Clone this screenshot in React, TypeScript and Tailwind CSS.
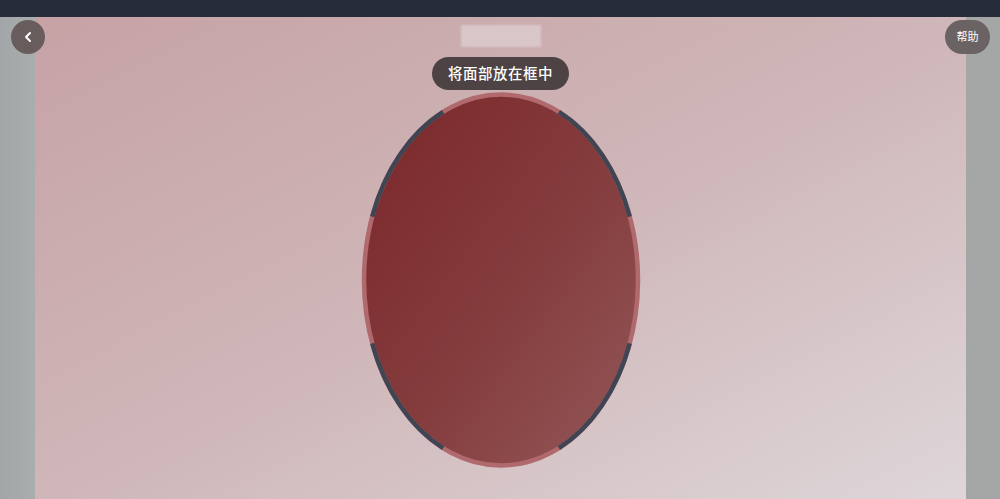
import { ChevronLeft } from 'lucide-react';

// points on the oval frame, t in degrees (0 = right, counter-clockwise)
const CX = 141;
const CY = 189;
const RX = 137;
const RY = 185.5;

function pt(t: number) {
  const r = (t * Math.PI) / 180;
  return [CX + RX * Math.cos(r), CY - RY * Math.sin(r)];
}

function arc(from: number, to: number) {
  const [x1, y1] = pt(from);
  const [x2, y2] = pt(to);
  // going counter-clockwise on screen means sweep-flag 0
  return `M ${x1} ${y1} A ${RX} ${RY} 0 0 0 ${x2} ${y2}`;
}

const guides = [
  [20, 65],
  [115, 160],
  [200, 245],
  [295, 340],
];

function FaceFrame() {
  return (
    <svg width="282" height="380" viewBox="0 0 282 380" className="block">
      <defs>
        <linearGradient id="face" x1="0" y1="0" x2="1" y2="1">
          <stop offset="0" stopColor="#7b2729" />
          <stop offset="0.55" stopColor="#853d3e" />
          <stop offset="1" stopColor="#935859" />
        </linearGradient>
      </defs>
      <ellipse cx={CX} cy={CY} rx={RX} ry={RY} fill="url(#face)" stroke="#b06a6d" strokeWidth="4.5" />
      {guides.map(([a, b]) => (
        <path key={a} d={arc(a, b)} fill="none" stroke="#3f4553" strokeWidth="4.5" />
      ))}
    </svg>
  );
}

export default function App() {
  return (
    <div
      className="relative w-[1000px] h-[499px] overflow-hidden flex flex-col"
      style={{ fontFamily: '"Noto Sans", "Noto Sans CJK SC", sans-serif' }}
    >
      {/* status bar */}
      <div className="h-[17px] bg-[#262c39] shrink-0" />

      <div className="flex flex-1 min-h-0">
        <div className="w-[35px] bg-gradient-to-r from-[#a2a6a8] to-[#a9adad]" />

        {/* camera preview */}
        <div className="flex-1 flex flex-col items-center bg-gradient-to-br from-[#c6a2a5] via-[#cfb6b8] to-[#ded6d9]">
          <div className="mt-[8px] w-[80px] h-[22px] bg-[#d9c6c9] blur-[1px]" />
          <div className="mt-[10px] h-[33px] px-[16px] rounded-full bg-[#4d4244] flex items-center text-white text-[14.5px] font-medium tracking-[0.5px]">
            将面部放在框中
          </div>
          <div className="mt-[1px]">
            <FaceFrame />
          </div>
        </div>

        <div className="w-[34px] bg-[#a5a7a7]" />
      </div>

      {/* overlay buttons */}
      <button className="absolute left-[11px] top-[20px] w-[34px] h-[34px] rounded-full bg-[#685c5d] flex items-center justify-center text-white">
        <ChevronLeft className="w-[16px] h-[16px]" strokeWidth={3} />
      </button>
      <button className="absolute left-[945px] top-[20px] w-[45px] h-[34px] rounded-full bg-[#6a6263] flex items-center justify-center text-white text-[11px]">
        帮助
      </button>
    </div>
  );
}
